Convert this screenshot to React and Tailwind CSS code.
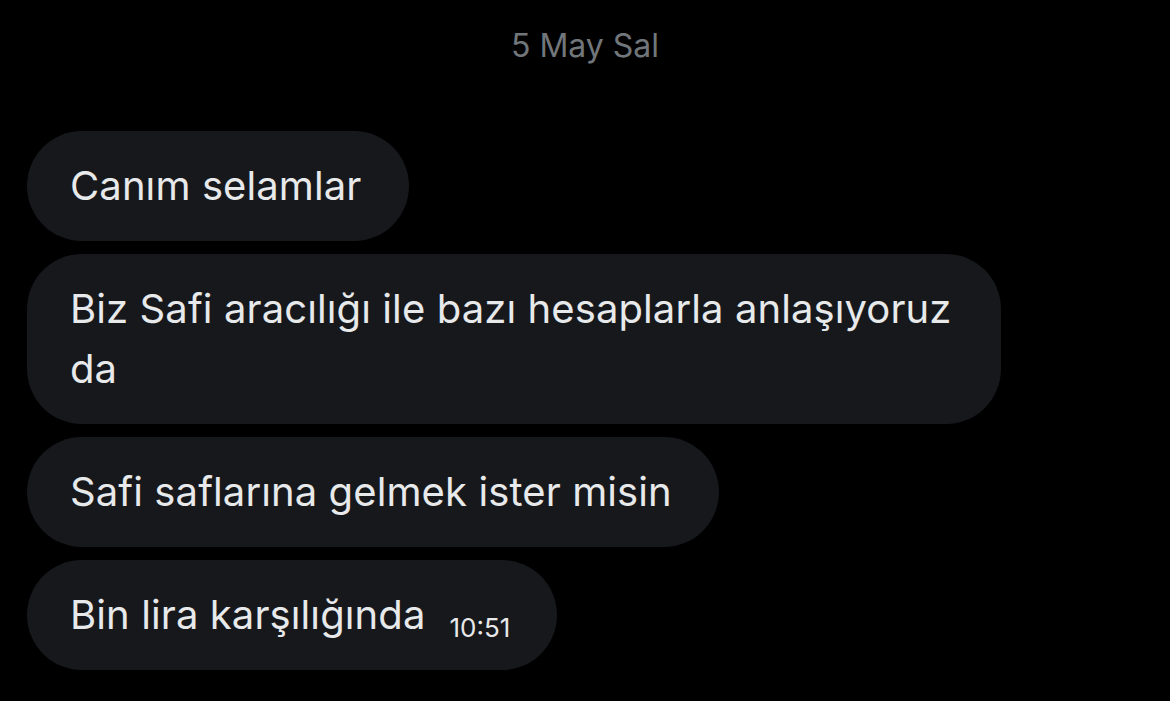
import React from 'react';

const messages = [
  { id: 1, text: 'Canım selamlar' },
  { id: 2, text: 'Biz Safi aracılığı ile bazı hesaplarla anlaşıyoruz da', wide: true },
  { id: 3, text: 'Safi saflarına gelmek ister misin' },
  { id: 4, text: 'Bin lira karşılığında', time: '10:51' },
];

function Bubble({ msg }) {
  return (
    <div
      className={`bg-[#16181c] text-[#e7e9ea] text-[40px] tracking-[0.1px] leading-[60px] pl-[43px] pr-[47px] py-[25px] rounded-[55px] ${
        msg.wide ? 'w-[974px]' : 'w-fit'
      }`}
    >
      {msg.text}
      {msg.time && (
        <span className="ml-[24px] text-[26px] leading-none tracking-normal text-[#e7e9ea] relative top-[8px]">{msg.time}</span>
      )}
    </div>
  );
}

export default function App() {
  return (
    <div
      className="w-[1170px] h-[701px] bg-black overflow-hidden px-[27px]"
      style={{ fontFamily: 'Inter, "Noto Sans", sans-serif' }}
    >
      <div className="text-center text-[#71767b] text-[32px] pt-[22px] h-[131px]">5 May Sal</div>
      <div className="flex flex-col gap-[13px]">
        {messages.map(m => (
          <Bubble key={m.id} msg={m} />
        ))}
      </div>
    </div>
  );
}
